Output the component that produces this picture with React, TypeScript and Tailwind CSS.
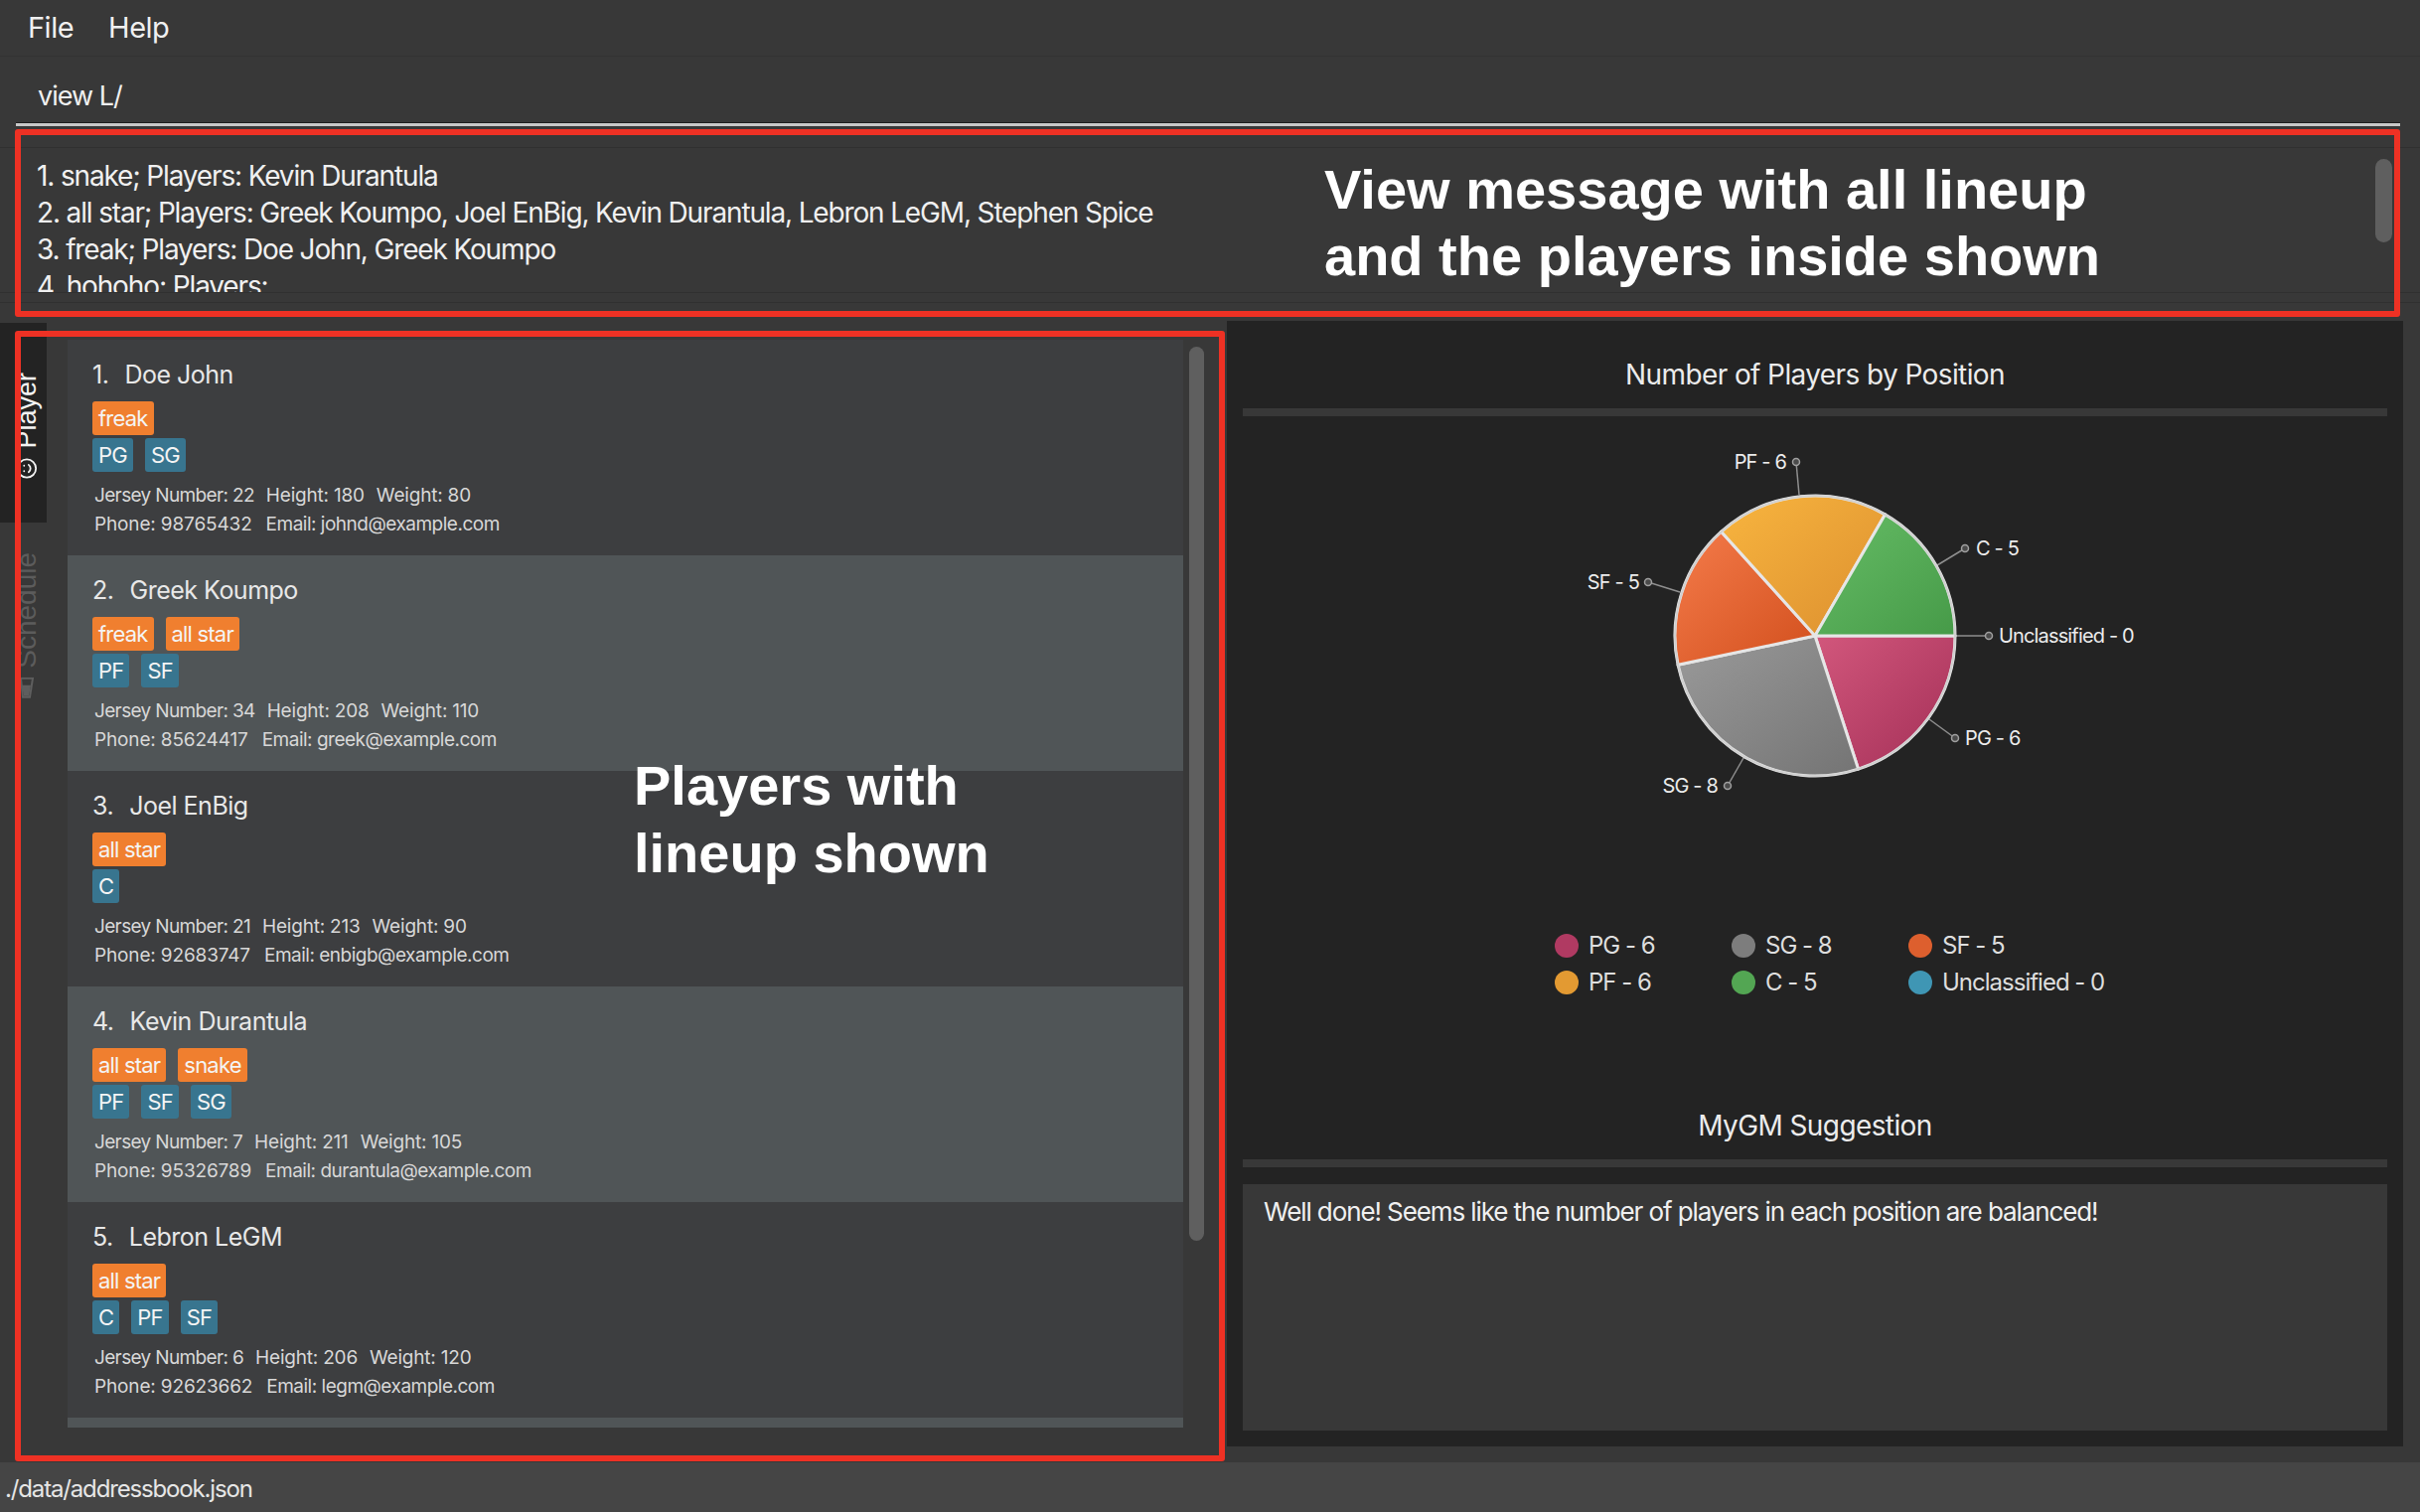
import { Smile } from 'lucide-react';

interface Player {
    name: string;
    lineups: string[];
    positions: string[];
    jersey: number;
    height: number;
    weight: number;
    phone: string;
    email: string;
}

const players: Player[] = [
    { name: 'Doe John', lineups: ['freak'], positions: ['PG', 'SG'], jersey: 22, height: 180, weight: 80, phone: '98765432', email: 'johnd@example.com' },
    { name: 'Greek Koumpo', lineups: ['freak', 'all star'], positions: ['PF', 'SF'], jersey: 34, height: 208, weight: 110, phone: '85624417', email: 'greek@example.com' },
    { name: 'Joel EnBig', lineups: ['all star'], positions: ['C'], jersey: 21, height: 213, weight: 90, phone: '92683747', email: 'enbigb@example.com' },
    { name: 'Kevin Durantula', lineups: ['all star', 'snake'], positions: ['PF', 'SF', 'SG'], jersey: 7, height: 211, weight: 105, phone: '95326789', email: 'durantula@example.com' },
    { name: 'Lebron LeGM', lineups: ['all star'], positions: ['C', 'PF', 'SF'], jersey: 6, height: 206, weight: 120, phone: '92623662', email: 'legm@example.com' },
];

const wedges = [
    { id: 'pg', from: 0, to: 72, c1: '#d2577c', c2: '#a32f57' },
    { id: 'sg', from: 72, to: 168, c1: '#9a9a9a', c2: '#747474' },
    { id: 'sf', from: 168, to: 228, c1: '#f47b4a', c2: '#d24f1d' },
    { id: 'pf', from: 228, to: 300, c1: '#f8b53f', c2: '#dc8f2f' },
    { id: 'c', from: 300, to: 360, c1: '#66bd66', c2: '#469a48' },
];

const callouts = [
    { text: 'PF - 6', dot: [1808, 465], from: [1811, 498], tx: 1798, anchor: 'end' },
    { text: 'C - 5', dot: [1978, 552], from: [1950, 569], tx: 1989, anchor: 'start' },
    { text: 'Unclassified - 0', dot: [2002, 640], from: [1968, 640], tx: 2012, anchor: 'start' },
    { text: 'PG - 6', dot: [1968, 743], from: [1942, 724], tx: 1978, anchor: 'start' },
    { text: 'SG - 8', dot: [1739, 791], from: [1755, 763], tx: 1729, anchor: 'end' },
    { text: 'SF - 5', dot: [1659, 586], from: [1691, 596], tx: 1650, anchor: 'end' },
];

const legend = [
    { label: 'PG - 6', color: 'bg-[#b03a62]' },
    { label: 'SG - 8', color: 'bg-[#7d7d7d]' },
    { label: 'SF - 5', color: 'bg-[#dd5f2e]' },
    { label: 'PF - 6', color: 'bg-[#e39a32]' },
    { label: 'C - 5', color: 'bg-[#53a653]' },
    { label: 'Unclassified - 0', color: 'bg-[#3f96b4]' },
];

const wedgePath = (from: number, to: number) => {
    const cx = 1827, cy = 640, r = 141;
    const a = (from * Math.PI) / 180;
    const b = (to * Math.PI) / 180;
    return `M${cx} ${cy}L${cx + r * Math.cos(a)} ${cy + r * Math.sin(a)}A${r} ${r} 0 0 1 ${cx + r * Math.cos(b)} ${cy + r * Math.sin(b)}Z`;
};

const PieChart = () => (
    <svg viewBox="1500 440 654 370" className="w-[654px] h-[370px] block">
        <defs>
            {wedges.map((w) => (
                <linearGradient key={w.id} id={w.id} x1="0" y1="0" x2="1" y2="1">
                    <stop offset="0%" stopColor={w.c1} />
                    <stop offset="100%" stopColor={w.c2} />
                </linearGradient>
            ))}
        </defs>
        {callouts.map((c) => (
            <g key={c.text}>
                <line x1={c.from[0]} y1={c.from[1]} x2={c.dot[0]} y2={c.dot[1]} stroke="#8f8f8f" strokeWidth="1.5" />
                <circle cx={c.dot[0]} cy={c.dot[1]} r="3.5" fill="#4a4a4a" stroke="#a0a0a0" strokeWidth="1.5" />
                <text x={c.tx} y={c.dot[1] + 7} textAnchor={c.anchor as 'start' | 'end'} fill="#ececec" fontSize="20" letterSpacing="-0.85">
                    {c.text}
                </text>
            </g>
        ))}
        {wedges.map((w) => (
            <path key={w.id} d={wedgePath(w.from, w.to)} fill={`url(#${w.id})`} stroke="#e6e6e6" strokeWidth="3" strokeLinejoin="round" />
        ))}
        <circle cx="1827" cy="640" r="141" fill="none" stroke="#d0d0d0" strokeWidth="2" />
    </svg>
);

const Tag = ({ text, color }: { text: string; color: string }) => (
    <span className={`${color} h-[34px] px-[6px] rounded-[3px] flex items-center text-[22px] tracking-[-0.8px] text-[#f4f4f4]`}>{text}</span>
);

const PlayerCard = ({ player, index }: { player: Player; index: number }) => (
    <div className={`${index % 2 === 0 ? 'bg-[#3d3e40]' : 'bg-[#505557]'} h-[217px] shrink-0 pl-[25px] flex flex-col`}>
        <div className="h-[62px] pt-[18px] text-[25px] leading-[34px] tracking-[-0.5px] text-[#e8e8e8] whitespace-pre">
            {index + 1}.  <span className="ml-[3px]">{player.name}</span>
        </div>
        <div className="flex gap-[12px]">
            {player.lineups.map((l) => <Tag key={l} text={l} color="bg-[#f07f2f]" />)}
        </div>
        <div className="flex gap-[12px] mt-[3px]">
            {player.positions.map((p) => <Tag key={p} text={p} color="bg-[#38758f]" />)}
        </div>
        <div className="mt-[9px] ml-[2px] text-[19px] leading-[29px] text-[#d8d8d8] whitespace-pre">
            <div className="flex gap-[12px] tracking-[-0.2px]">
                <span className="tracking-[-0.65px]">Jersey Number: {player.jersey}</span>
                <span>Height: {player.height}</span>
                <span>Weight: {player.weight}</span>
            </div>
            <div className="flex gap-[14px]">
                <span className="tracking-[-0.15px]">Phone: {player.phone}</span>
                <span className="tracking-[-0.5px]">Email: {player.email}</span>
            </div>
        </div>
    </div>
);

const SectionTitle = ({ text, extra }: { text: string; extra?: string }) => (
    <div className={`${extra ?? ''} h-[88px] shrink-0 pt-[20px] flex items-center justify-center text-[28px] tracking-[-0.6px] text-[#ececec]`}>{text}</div>
);

export default function App() {
    return (
        <div className="relative w-[2436px] h-[1522px] overflow-hidden flex flex-col bg-[#383838] text-white font-['Inter','Noto_Sans',sans-serif]">
            <div className="h-[57px] shrink-0 border-b border-[#323232] flex items-center gap-[35px] pl-[28px] text-[29px] tracking-[-0.5px] text-[#f0f0f0]">
                <span>File</span>
                <span>Help</span>
            </div>

            <div className="h-[73px] shrink-0 pl-[16px] pr-[20px] flex flex-col">
                <div className="flex-1 pl-[22px] pt-[14px] flex items-center text-[27px] tracking-[-1px] text-[#f0f0f0]">view L/</div>
                <div className="h-[1px] bg-[#1e1e1e]" />
                <div className="h-[3px] bg-[#c8c8c8] mb-[3px]" />
            </div>

            <div className="h-[188px] shrink-0">
                <div className="h-[175px] pt-[18px] border-b border-[#303030]">
                    <div className="h-[147px] border-y border-[#303030] overflow-hidden relative pl-[37px] pt-[10px] text-[28px] leading-[37px] tracking-[-1.15px] text-[#f0f0f0]">
                        <div>1. snake; Players: Kevin Durantula</div>
                        <div>2. all star; Players: Greek Koumpo, Joel EnBig, Kevin Durantula, Lebron LeGM, Stephen Spice</div>
                        <div>3. freak; Players: Doe John, Greek Koumpo</div>
                        <div>4. hohoho; Players:</div>
                        <div className="absolute left-[2391px] top-[11px] w-[17px] h-[84px] rounded-full bg-[#5f5f5f]" />
                    </div>
                </div>
            </div>

            <div className="flex-1 flex min-h-0">
                <div className="w-[1235px] flex pb-[35px]">
                    <div className="w-[68px] flex flex-col">
                        <div className="w-[47px] h-[201px] mt-[7px] bg-[#232323] pt-[50px] flex justify-center items-start">
                            <div className="flex items-center gap-[9px] [writing-mode:vertical-rl] rotate-180 font-['Liberation_Sans',sans-serif] text-[27px] leading-[32px] text-[#f2f2f2] translate-x-[3px]">
                                <Smile size={22} strokeWidth={2} className="rotate-90" />
                                Player
                            </div>
                        </div>
                        <div className="w-[47px] flex justify-center pt-[30px]">
                            <div className="flex items-center gap-[9px] [writing-mode:vertical-rl] rotate-180 font-['Liberation_Sans',sans-serif] text-[28px] leading-[32px] text-[#5c5c5c] translate-x-[3px]">
                                <svg width="14" height="22" viewBox="0 0 14 22" className="rotate-180">
                                    <path d="M1 1H13L10 20H3Z" fill="none" stroke="#5e5e5e" strokeWidth="2" />
                                    <path d="M2 8L11 8L9 19H4Z" fill="#5e5e5e" />
                                </svg>
                                Schedule
                            </div>
                        </div>
                    </div>
                    <div className="w-[1123px] mt-[24px] h-[1095px] overflow-hidden flex flex-col bg-[#505557]">
                        {players.map((p, i) => <PlayerCard key={p.name} player={p} index={i} />)}
                    </div>
                    <div className="flex-1 relative">
                        <div className="absolute left-[6px] top-[31px] w-[15px] h-[900px] rounded-full bg-[#5f5f5f]" />
                    </div>
                </div>

                <div className="w-[1184px] h-[1133px] mt-[5px] bg-[#232323] px-[16px] flex flex-col">
                    <SectionTitle text="Number of Players by Position" />
                    <div className="h-[8px] bg-[#383838] shrink-0" />
                    <div className="flex justify-center mt-[21px] shrink-0">
                        <PieChart />
                    </div>
                    <div className="grid grid-cols-[178px_178px_240px] gap-y-[13px] ml-[314px] mt-[130px] text-[24px] leading-[24px] tracking-[-1px] text-[#dedede]">
                        {legend.map((l) => (
                            <div key={l.label} className="flex items-center gap-[10px]">
                                <span className={`${l.color} w-[24px] h-[24px] rounded-full`} />
                                {l.label}
                            </div>
                        ))}
                    </div>
                    <SectionTitle text="MyGM Suggestion" extra="mt-[78px]" />
                    <div className="h-[8px] bg-[#383838] shrink-0" />
                    <div className="h-[248px] shrink-0 mt-[17px] bg-[#383838] px-[21px] pt-[9px] text-[26px] leading-[37px] tracking-[-1.1px] text-[#f0f0f0]">
                        Well done! Seems like the number of players in each position are balanced!
                    </div>
                </div>
            </div>

            <div className="h-[50px] shrink-0 bg-[#454545] pl-[5px] pt-[3px] flex items-center text-[24px] tracking-[-1.15px] text-[#e6e6e6]">./data/addressbook.json</div>

            {/* annotation overlay */}
            <div className="absolute left-[15px] top-[130px] w-[2401px] h-[189px] border-[6px] border-[#ee3124] rounded-[3px]" />
            <div className="absolute left-[15px] top-[333px] w-[1218px] h-[1138px] border-[6px] border-[#ee3124] rounded-[3px]" />
            <div className="absolute left-[1333px] top-[157px] font-['Liberation_Sans',sans-serif] font-bold text-[56px] leading-[67px] text-white whitespace-pre">
                {'View message with all lineup\nand the players inside shown'}
            </div>
            <div className="absolute left-[638px] top-[757px] font-['Liberation_Sans',sans-serif] font-bold text-[56px] leading-[68px] text-white whitespace-pre">
                {'Players with\nlineup shown'}
            </div>
        </div>
    );
}
